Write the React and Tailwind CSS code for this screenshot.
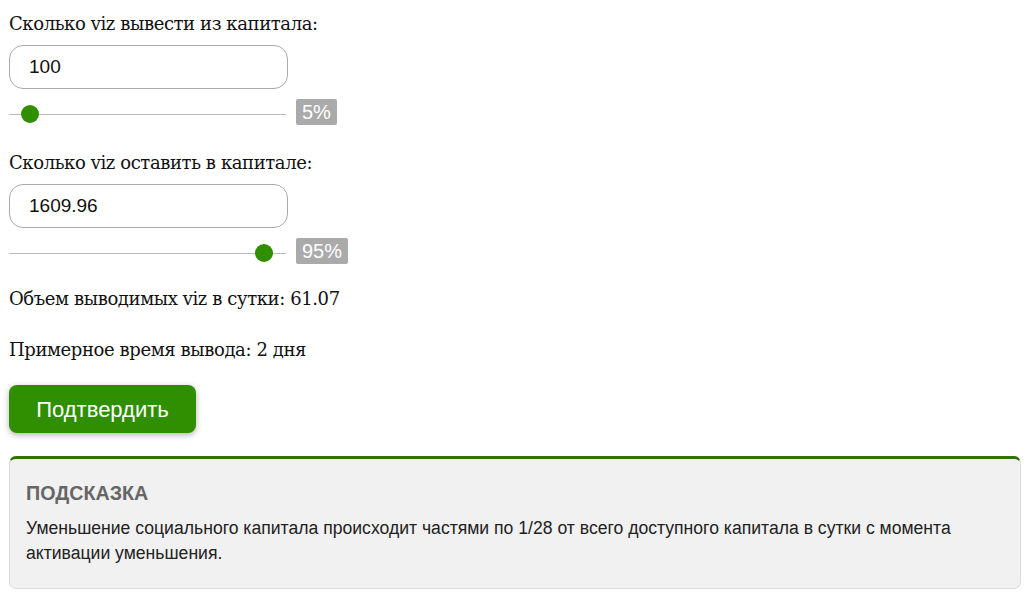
import React from "react";

function Slider({ pct, value }) {
  const center = 8 + 2.6 * pct;
  return (
    <div className="flex items-center mt-[10px] h-[26px]">
      <div className="relative w-[277px] h-[26px]">
        <div className="absolute left-0 right-0 top-[15px] h-px bg-[#bbbbbb]" />
        <div
          className="absolute top-[6px] w-[18px] h-[18px] rounded-full bg-[#2f8f00]"
          style={{ left: center - 9 }}
        />
      </div>
      <span className="ml-[10px] h-[26px] px-[6px] bg-[#aaaaaa] text-white text-[20px] leading-[26px] rounded-[2px] font-['Liberation_Sans',Arial,sans-serif]">
        {value}
      </span>
    </div>
  );
}

const serif = "text-[18px] leading-[26px] text-[#111] font-['DejaVu_Serif',Georgia,serif] tracking-[-0.4px]";

function Field({ label, value, pct, pctLabel }) {
  return (
    <div>
      <div className={serif}>{label}</div>
      <div className="mt-[8px] w-[279px] h-[44px] rounded-[14px] border border-[#aaaaaa] flex items-center pl-[19px] text-[19px] text-[#111] font-['Liberation_Sans',Arial,sans-serif]">
        {value}
      </div>
      <Slider pct={pct} value={pctLabel} />
    </div>
  );
}

export default function App() {
  return (
    <div className="bg-white w-[1035px] h-[593px] px-[9px] pt-[11px] overflow-hidden">
      <Field label="Сколько viz вывести из капитала:" value="100" pct={5} pctLabel="5%" />
      <div className="mt-[25px]">
        <Field label="Сколько viz оставить в капитале:" value="1609.96" pct={95} pctLabel="95%" />
      </div>
      <div className={"mt-[22px] " + serif}>Объем выводимых viz в сутки: 61.07</div>
      <div className={"mt-[25px] " + serif}>Примерное время вывода: 2 дня</div>
      <button className="mt-[22px] w-[187px] h-[48px] rounded-[8px] bg-[#2f8f00] text-white text-[22px] font-['Liberation_Sans',Arial,sans-serif] shadow-[0_2px_6px_rgba(0,0,0,0.3)]">
        Подтвердить
      </button>
      <div className="mt-[23px] w-[1012px] h-[133px] rounded-[7px] border border-[#dddddd] border-t-[3px] border-t-[#2e7400] bg-[#f1f1f1] px-[16px] pt-[22px] font-['Liberation_Sans',Arial,sans-serif]">
        <div className="text-[19.7px] font-bold text-[#666666] leading-[24px]">ПОДСКАЗКА</div>
        <div className="mt-[11px] text-[17.6px] leading-[25px] text-[#222]">
          Уменьшение социального капитала происходит частями по 1/28 от всего доступного капитала в сутки с момента активации уменьшения.
        </div>
      </div>
    </div>
  );
}
